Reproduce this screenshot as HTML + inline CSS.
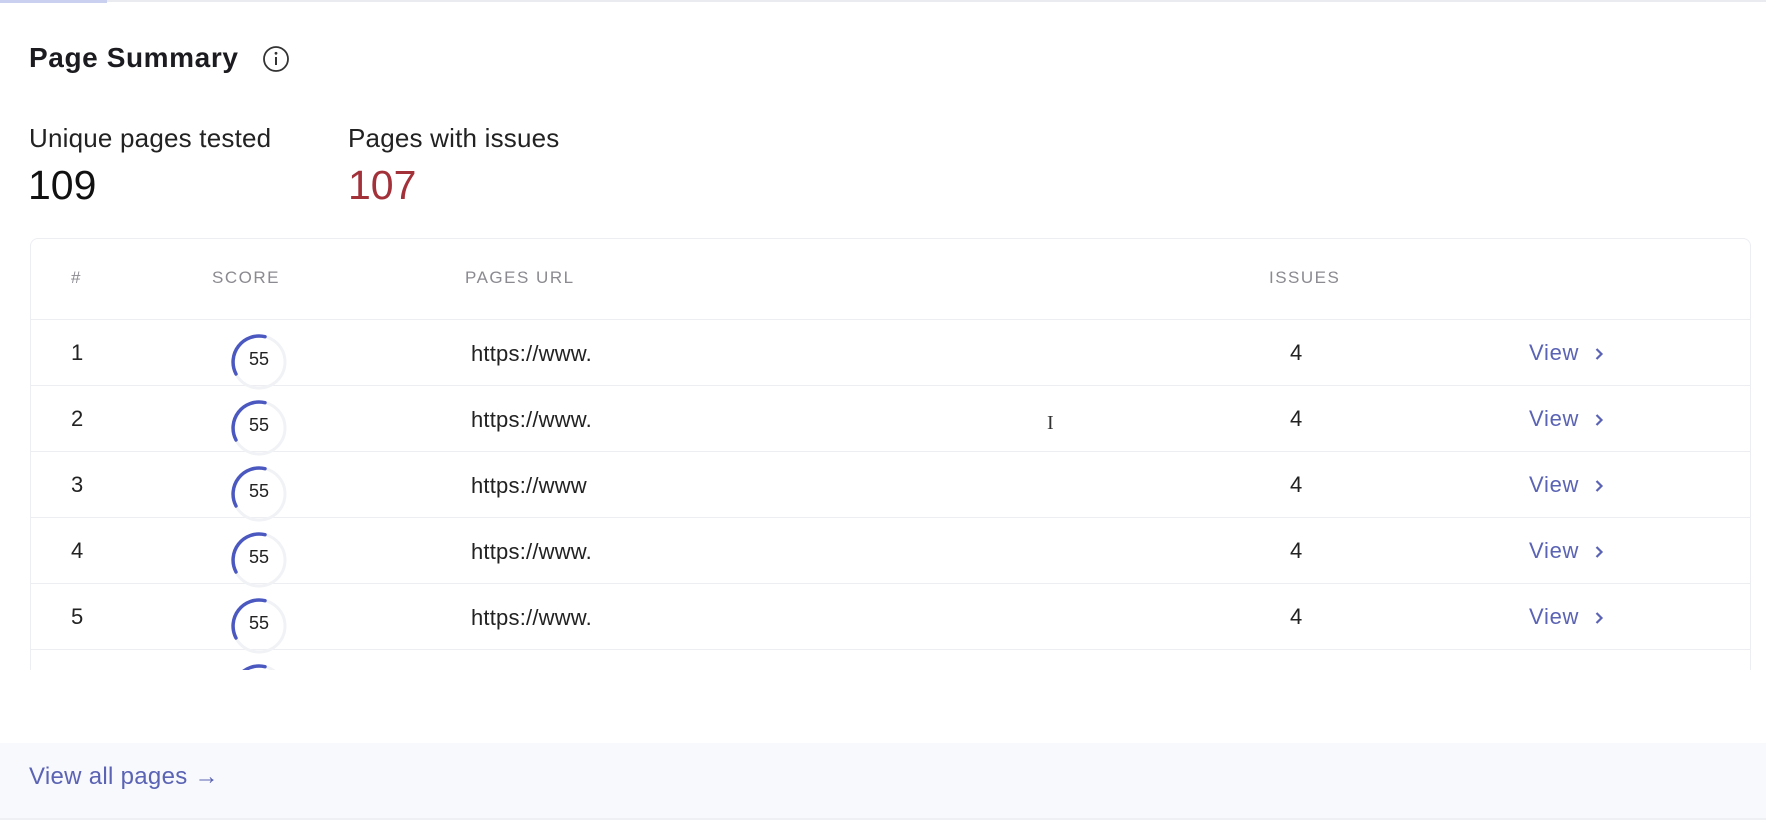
<!DOCTYPE html>
<html><head><meta charset="utf-8"><style>
*{margin:0;padding:0;box-sizing:border-box}
body{width:1766px;height:820px;background:#fff;font-family:"Liberation Sans",sans-serif;color:#1b1b1f;position:relative;overflow:hidden}
.a{position:absolute;white-space:nowrap}
.topline{position:absolute;left:0;top:0;width:1766px;height:2px;background:#e9ebf0}
.topbar{position:absolute;left:0;top:0;width:107px;height:3px;background:#c9d0f0}
.card{position:absolute;left:30px;top:238px;width:1721px;height:432px;border:1px solid #eceef2;border-bottom:none;border-radius:8px 8px 0 0;overflow:hidden}
.hd{position:absolute;top:0;height:81px;left:0;right:0;border-bottom:1px solid #eceef2}
.th{position:absolute;top:29px;font-size:17px;letter-spacing:1.5px;color:#8a8a90}
.row{position:absolute;left:0;right:0;height:66px;border-bottom:1px solid #eceef2}
.c{position:absolute;top:0;line-height:66px;font-size:22px;letter-spacing:0.2px;color:#222}
.v{color:#5a63b4;letter-spacing:0.7px}
.foot{position:absolute;left:0;top:743px;width:1766px;height:77px;background:#f8f9fc;border-bottom:2px solid #eef0f4}
</style></head><body>
<div class="topline"></div><div class="topbar"></div>
<div class="a" style="left:29px;top:42px;font-size:28px;font-weight:bold;letter-spacing:0.6px;color:#1c1c20">Page Summary</div>
<svg class="a" style="left:262px;top:45px" width="28" height="28" viewBox="0 0 28 28"><circle cx="14" cy="14" r="12" fill="none" stroke="#333" stroke-width="1.8"/><line x1="14" y1="12" x2="14" y2="20" stroke="#333" stroke-width="2"/><circle cx="14" cy="8.3" r="1.4" fill="#333"/></svg>
<div class="a" style="left:29px;top:123px;font-size:26px;letter-spacing:0.2px;color:#222">Unique pages tested</div>
<div class="a" style="left:28px;top:162px;font-size:41px;color:#111">109</div>
<div class="a" style="left:348px;top:123px;font-size:26px;letter-spacing:0.2px;color:#222">Pages with issues</div>
<div class="a" style="left:348px;top:162px;font-size:41px;color:#a3313a">107</div>
<div class="card">
<div class="hd">
<div class="th" style="left:40px">#</div>
<div class="th" style="left:181px">SCORE</div>
<div class="th" style="left:434px">PAGES URL</div>
<div class="th" style="left:1238px">ISSUES</div>
</div>
<div id="rows"></div>
</div>
<script>
var h='';for(var i=0;i<6;i++){var t=81+i*66;h+='<div class="row" style="top:'+t+'px">'+(i<5?'<div class="c" style="left:40px">'+(i+1)+'</div><div class="c" style="left:440px;top:1px">https://www'+(i==2?'':'.')+'</div><div class="c" style="left:1259px">4</div><div class="c v" style="left:1498px">View</div><svg style="position:absolute;left:1562px;top:27px" width="12" height="14" viewBox="0 0 12 14"><path d="M3.5 2 L8.5 7 L3.5 12" fill="none" stroke="#5a63b4" stroke-width="2.2"/></svg><div class="c" style="left:218px;top:6px;font-size:18px;letter-spacing:0">55</div>':'')+'<svg style="position:absolute;left:196px;top:10px" width="64" height="64" viewBox="0 0 64 64"><circle cx="32" cy="32" r="26" fill="none" stroke="#f1f2f5" stroke-width="3"/><path d="M9 44 A26 26 0 0 1 38 6.7" fill="none" stroke="#4a58c0" stroke-width="3.5" stroke-linecap="round"/></svg></div>';}
document.getElementById('rows').innerHTML=h;
</script>
<div class="a" style="left:1047px;top:412px;font-size:20px;color:#333;font-family:'Liberation Serif',serif">I</div>
<div class="foot"><div class="a" style="left:29px;top:20px;font-size:24px;letter-spacing:0.3px;color:#5a63b4">View all pages →</div></div>
</body></html>
